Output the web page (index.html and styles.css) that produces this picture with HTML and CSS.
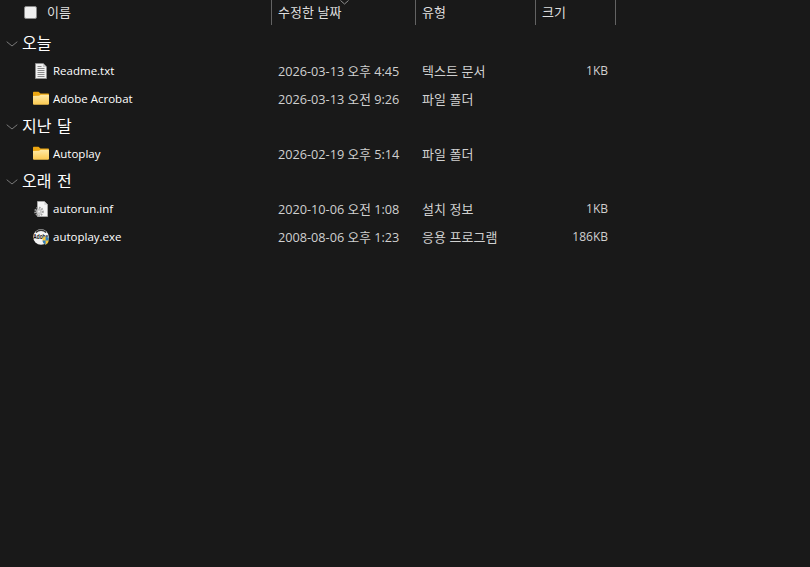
FILE: index.html
```html
<!DOCTYPE html>
<html lang="ko">
<head>
<meta charset="utf-8">
<title>파일 목록</title>
<link rel="stylesheet" href="styles.css">
</head>
<body>
<svg class="defs" width="0" height="0" aria-hidden="true">
  <defs>
    <linearGradient id="fold" x1="0" y1="0" x2="0" y2="1">
      <stop offset="0" stop-color="#ffeaa6"/>
      <stop offset="1" stop-color="#fcc94f"/>
    </linearGradient>
    <symbol id="folder" viewBox="0 0 16 16">
      <path d="M0 1.8C0 1.3 .4 .8 1 .8h4.5L7.5 2.5H15c.6 0 1 .4 1 1V7H0z" fill="#eda711"/>
      <path d="M0 4.9l6-.1L7.7 3.8H15.2c.5 0 .8.3.8.8v8.2c0 .5-.4.9-.9.9H.9c-.5 0-.9-.4-.9-.9z" fill="url(#fold)"/>
    </symbol>
    <symbol id="doc" viewBox="0 0 12 16">
      <path d="M.5.5h7.7l3.3 3.3v11.7H.5z" fill="#f1f1f1" stroke="#8d8d8d"/>
      <path d="M8 .8v3.2h3.2z" fill="#c9c9c9"/>
      <path d="M2.5 3.5h4M2.5 5.5h7M2.5 7.5h7M2.5 9.5h7M2.5 11.5h7M2.5 13.5h7" stroke="#8a8a8a" stroke-width="1"/>
    </symbol>
    <symbol id="inf" viewBox="0 0 16 16">
      <path d="M4.5.5h7l3 3v12h-10z" fill="#f4f4f4" stroke="#a5a5a5"/>
      <path d="M11.3.8v3h3z" fill="#cfcfcf"/>
      <circle cx="6" cy="10.5" r="3.8" fill="none" stroke="#a0a0a0" stroke-width="2" stroke-dasharray="1.5 1"/>
      <circle cx="6" cy="10.5" r="2.8" fill="#c4c4c4"/>
      <circle cx="6" cy="10.5" r="1" fill="#f0f0f0"/>
    </symbol>
  </defs>
</svg>
<main class="list">
  <header class="head">
    <div class="col col-name"><span class="check"></span><span class="head-label">이름</span></div>
    <div class="col col-date"><span class="head-label">수정한 날짜</span>
      <svg class="sort" width="9" height="5" viewBox="0 0 9 5"><path d="M.5.5l4 3.5 4-3.5" fill="none" stroke="#8e8e8e"/></svg>
    </div>
    <div class="col col-type"><span class="head-label">유형</span></div>
    <div class="col col-size"><span class="head-label">크기</span></div>
  </header>

  <div class="rows">
    <div class="group"><svg class="chev" width="12" height="6" viewBox="0 0 12 6"><path d="M.7.7L6 5l5.3-4.3" fill="none" stroke="#7a7a7a"/></svg><span>오늘</span></div>
    <div class="row">
      <div class="name"><svg class="icon icon-doc" width="12" height="16"><use href="#doc"/></svg><span>Readme.txt</span></div>
      <div class="cell date">2026-03-13 오후 4:45</div><div class="cell">텍스트 문서</div><div class="cell size">1KB</div>
    </div>
    <div class="row">
      <div class="name"><svg class="icon" width="16" height="16"><use href="#folder"/></svg><span>Adobe Acrobat</span></div>
      <div class="cell date">2026-03-13 오전 9:26</div><div class="cell">파일 폴더</div><div class="cell size"></div>
    </div>

    <div class="group"><svg class="chev" width="12" height="6" viewBox="0 0 12 6"><path d="M.7.7L6 5l5.3-4.3" fill="none" stroke="#7a7a7a"/></svg><span>지난 달</span></div>
    <div class="row">
      <div class="name"><svg class="icon" width="16" height="16"><use href="#folder"/></svg><span>Autoplay</span></div>
      <div class="cell date">2026-02-19 오후 5:14</div><div class="cell">파일 폴더</div><div class="cell size"></div>
    </div>

    <div class="group"><svg class="chev" width="12" height="6" viewBox="0 0 12 6"><path d="M.7.7L6 5l5.3-4.3" fill="none" stroke="#7a7a7a"/></svg><span>오래 전</span></div>
    <div class="row">
      <div class="name"><svg class="icon" width="16" height="16"><use href="#inf"/></svg><span>autorun.inf</span></div>
      <div class="cell date">2020-10-06 오전 1:08</div><div class="cell">설치 정보</div><div class="cell size">1KB</div>
    </div>
    <div class="row">
      <div class="name">
        <svg class="icon" width="16" height="16" viewBox="0 0 16 16">
          <circle cx="8" cy="8" r="7.8" fill="#f4f4f4"/>
          <path d="M2.2 3A7.8 7.8 0 0 1 13.8 3L12.6 4A6.4 6.4 0 0 0 3.4 4z" fill="#333"/>
          <text x="0.3" y="7.2" transform="scale(1 1.4)" class="adobe">Adobe</text>
          <path d="M9.6 8.8l3-1.2 3 1.2v3c0 2-1.6 3.3-3 3.9-1.4-.6-3-1.9-3-3.9z" fill="#f5c63c"/>
          <path d="M12.6 7.6l3 1.2v2.8h-3zM9.6 11.6h3v4.1c-1.4-.6-3-1.9-3-4.1z" fill="#2f7fc4"/>
        </svg><span>autoplay.exe</span>
      </div>
      <div class="cell date">2008-08-06 오후 1:23</div><div class="cell">응용 프로그램</div><div class="cell size">186KB</div>
    </div>
  </div>
</main>
</body>
</html>
```
FILE: styles.css
```css
* { box-sizing: border-box; }
html, body { margin: 0; height: 100%; }
body {
  background: #191919;
  color: #fff;
  font-family: "Noto Sans CJK KR", "Open Sans", sans-serif;
  font-size: 13px;
  overflow: hidden;
}
.defs { display: block; height: 0; }
.list { width: 616px; }
.head {
  display: grid;
  grid-template-columns: 272px 144px 120px 80px;
  height: 25px;
}
.col {
  position: relative;
  display: flex;
  align-items: center;
  padding-left: 6px;
  border-right: 1px solid #636363;
  color: #dedede;
}
.col-name { padding-left: 24px; }
.check {
  width: 13px;
  height: 13px;
  margin-right: 10px;
  background: #f0f0f0;
  border: 1px solid #8a8a8a;
  border-radius: 2px;
}
.head-label { line-height: 16px; margin-bottom: 2px; }
.sort { position: absolute; left: 68px; top: 0; }
.rows { padding-top: 5px; }
.group {
  display: flex;
  align-items: center;
  height: 27px;
  padding-left: 6px;
  padding-bottom: 4px;
  font-size: 16px;
  line-height: 20px;
  word-spacing: 1px;
  color: #fff;
}
.chev { margin-right: 4px; margin-top: 5px; }
.row {
  display: grid;
  grid-template-columns: 272px 144px 120px 80px;
  height: 28px;
  align-items: center;
  line-height: 18px;
}
.name {
  display: flex;
  align-items: center;
  padding-left: 33px;
  font-family: "Open Sans", sans-serif;
  font-size: 11.5px;
  color: #fff;
}
.icon { flex: none; margin-right: 4px; }
.icon-doc { margin-left: 2px; margin-right: 6px; }
.cell { padding-left: 6px; color: #d0d0d0; white-space: nowrap; }
.date { font-family: "Open Sans", "Noto Sans CJK KR", sans-serif; font-size: 12.7px; }
.size {
  text-align: right;
  padding-right: 8px;
  padding-left: 0;
  font-family: "Open Sans", sans-serif;
  font-size: 12px;
}
.adobe {
  font-family: "Liberation Sans", sans-serif;
  font-size: 4.8px;
  font-weight: 700;
  fill: #111;
}
```
